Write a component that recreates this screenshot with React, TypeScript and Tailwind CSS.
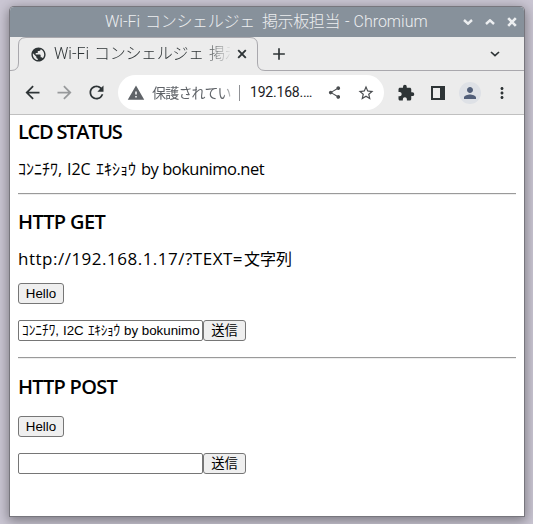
import type { ReactNode } from 'react';
import {
  MdPublic, MdAdd, MdArrowBack, MdArrowForward, MdRefresh, MdWarning,
  MdShare, MdStarBorder, MdExtension, MdPerson, MdMoreVert,
} from 'react-icons/md';

const ui = "font-['Roboto','Noto_Sans_CJK_JP',sans-serif]";
const body = "font-['Open_Sans','Noto_Sans_CJK_JP',sans-serif]";
const form = "font-['Liberation_Sans','Noto_Sans_CJK_JP',sans-serif]";

function Chevron({ up = false, className = '' }: { up?: boolean; className?: string }) {
  return (
    <svg viewBox="0 0 10 6" className={`block h-[6px] w-[10px] shrink-0 ${className}`} fill="none" stroke="currentColor">
      <path d={up ? 'M1 5 5 1.3 9 5' : 'M1 1 5 4.7 9 1'} />
    </svg>
  );
}

function TitleBar() {
  return (
    <div className={`flex h-[30px] shrink-0 items-center bg-[#87919b] pl-[95px] text-[#eceef0] ${ui}`}>
      <div className="flex w-[323px] whitespace-pre text-[16px] leading-[30px] font-light">
        <span className="w-[40px] shrink-0">Wi-Fi</span>
        <span className="w-[117px] shrink-0 tracking-[-0.3px]">コンシェルジェ</span>
        <span className="w-[83px] shrink-0 tracking-[-0.4px]">掲示板担当</span>
        <span className="shrink-0">- Chromium</span>
      </div>
      <Chevron className="ml-[35px] stroke-[2.4]" />
      <Chevron up className="ml-[12px] stroke-[2.4]" />
      <svg viewBox="0 0 10 10" className="ml-[12px] h-[10px] w-[10px]" stroke="currentColor" strokeWidth="2.6">
        <path d="M1.2 1.2 8.8 8.8M8.8 1.2 1.2 8.8" />
      </svg>
    </div>
  );
}

function TabStrip() {
  return (
    <div className={`relative flex h-[34px] shrink-0 items-center bg-[#ececec] pl-[20px] text-[#2e3436] ${ui}`}>
      <svg viewBox="0 0 514 34" className="absolute inset-0 h-[34px] w-[514px]" fill="none" stroke="#a9a8ad">
        <path d="M0 33.5H1Q8.5 33.5 8.5 26V8Q8.5 .5 16 .5H240Q247.500 .5 247.500 8V26Q247.500 33.500 255 33.500H514" />
      </svg>
      <MdPublic className="size-[17px] shrink-0" />
      <div className="ml-[7px] flex w-[176px] overflow-hidden whitespace-pre text-[16px] leading-[32px] font-light [mask-image:linear-gradient(to_right,#000_150px,transparent_178px)]">
        <span className="w-[40px] shrink-0">Wi-Fi</span>
        <span className="w-[115px] shrink-0 tracking-[-0.3px]">コンシェルジェ</span>
        <span className="shrink-0">掲示</span>
      </div>
      <svg viewBox="0 0 10 10" className="ml-[7px] h-[10px] w-[10px] shrink-0" stroke="currentColor" strokeWidth="1.9">
        <path d="M1.2 1.2 8.8 8.8M8.8 1.2 1.2 8.8" />
      </svg>
      <MdAdd className="ml-[22px] size-[20px] shrink-0" />
      <Chevron className="ml-[201px] stroke-[1.7]" />
    </div>
  );
}

function Toolbar() {
  return (
    <div className={`flex h-[44px] shrink-0 items-center border-b border-[#c0c0c0] bg-[#ececec] pl-[12px] text-[#2e3436] ${ui}`}>
      <MdArrowBack className="size-[21px] shrink-0" />
      <MdArrowForward className="ml-[11px] size-[21px] shrink-0 text-[#97999b]" />
      <MdRefresh className="ml-[11px] size-[21px] shrink-0" />
      <div className="ml-[11px] flex h-[35px] w-[266px] shrink-0 items-center rounded-full bg-white pl-[9px]">
        <MdWarning className="size-[18px] shrink-0 text-[#5f6368]" />
        <div className="ml-[7px] w-[80px] overflow-hidden text-[14px] leading-[34px] tracking-[-0.8px] whitespace-nowrap text-[#5f6368] [mask-image:linear-gradient(to_right,#000_70px,transparent_84px)]">
          保護されてい
        </div>
        <div className="ml-[7px] h-[16px] w-px shrink-0 bg-[#909296]" />
        <span className="ml-[10px] w-[64px] shrink-0 text-[14px] tracking-[-0.2px] whitespace-nowrap text-[#202124]">192.168.…</span>
        <MdShare className="ml-[13px] size-[15px] shrink-0 text-[#4a4d50]" />
        <MdStarBorder className="ml-[15px] size-[18px] shrink-0 text-[#4a4d50]" />
      </div>
      <MdExtension className="ml-[13px] size-[18px] shrink-0" />
      <div className="ml-[16px] h-[14px] w-[14px] shrink-0 border-2 border-r-[5px] border-[#2e3436]" />
      <div className="ml-[14px] flex size-[22px] shrink-0 items-center justify-center rounded-full bg-[#dee1e6]">
        <MdPerson className="size-[18px] text-[#525f79]" />
      </div>
      <MdMoreVert className="ml-[12px] size-[18px] shrink-0" />
    </div>
  );
}

function Heading({ children, className }: { children: ReactNode; className: string }) {
  return <h3 className={`h-[26px] text-[20px] leading-[26px] font-semibold whitespace-nowrap ${className}`}>{children}</h3>;
}

function PushButton({ children, className = 'w-[46px]' }: { children: ReactNode; className?: string }) {
  return (
    <button className={`flex h-[21px] shrink-0 items-center justify-center rounded-[3px] border border-[#767676] bg-[#efefef] text-[13.333px] leading-[19px] whitespace-nowrap ${className} ${form}`}>
      {children}
    </button>
  );
}

function SendForm({ children }: { children?: ReactNode }) {
  return (
    <div className="mt-[16px] flex">
      <div className={`flex h-[21px] w-[185px] items-center overflow-hidden rounded-[2px] border border-[#767676] pl-[3px] text-[13.333px] leading-[19px] whitespace-pre ${form}`}>
        {children}
      </div>
      <PushButton className="w-[43px]">送信</PushButton>
    </div>
  );
}

function Rule() {
  return <div className="h-[2px] border-t border-b border-t-[#9a9a9a] border-b-[#eeeeee]" />;
}

export default function App() {
  return (
    <div className="h-[524px] w-[533px] overflow-hidden bg-[#cac6d3] pt-[7px] pl-[10px]">
      <div className="flex h-[509px] w-[514px] flex-col overflow-hidden rounded-t-[4px] bg-white shadow-[0_0_0_1px_#77767d,0_3px_12px_2px_rgba(0,0,0,0.38)]">
        <TitleBar />
        <TabStrip />
        <Toolbar />
        <main className={`flex flex-col px-[8px] pt-[4px] text-black ${body}`}>
          <Heading className="tracking-[-1.25px]">LCD STATUS</Heading>
          <p className="mt-[12px] flex h-[24px] text-[16px] leading-[24px] whitespace-pre">
            <span className="w-[49px] shrink-0">ｺﾝﾆﾁﾜ, </span>
            <span className="w-[29px] shrink-0">I2C</span>
            <span className="w-[45px] shrink-0">ｴｷｼｮｳ</span>
            <span className="shrink-0 text-[16.5px] tracking-[-0.5px]">by bokunimo.net</span>
          </p>
          <div className="mt-[12px]"><Rule /></div>
          <div className="mt-[14px]"><Heading className="tracking-[-0.6px]">HTTP GET</Heading></div>
          <p className="mt-[12px] flex h-[24px] text-[16px] leading-[24px] whitespace-pre">
            <span className="w-[226px] shrink-0 text-[17px] tracking-[0.5px]">http://192.168.1.17/?TEXT=</span>
            <span className="shrink-0">文字列</span>
          </p>
          <div className="mt-[12px]"><PushButton>Hello</PushButton></div>
          <SendForm>
            <span className="w-[41px] shrink-0">ｺﾝﾆﾁﾜ, </span>
            <span className="w-[25px] shrink-0">I2C</span>
            <span className="w-[36px] shrink-0 tracking-[-0.3px]">ｴｷｼｮｳ</span>
            <span className="shrink-0">by bokunimo</span>
          </SendForm>
          <div className="mt-[16px]"><Rule /></div>
          <div className="mt-[15px]"><Heading className="tracking-[-0.7px]">HTTP POST</Heading></div>
          <div className="mt-[16px]"><PushButton>Hello</PushButton></div>
          <SendForm />
        </main>
      </div>
    </div>
  );
}
